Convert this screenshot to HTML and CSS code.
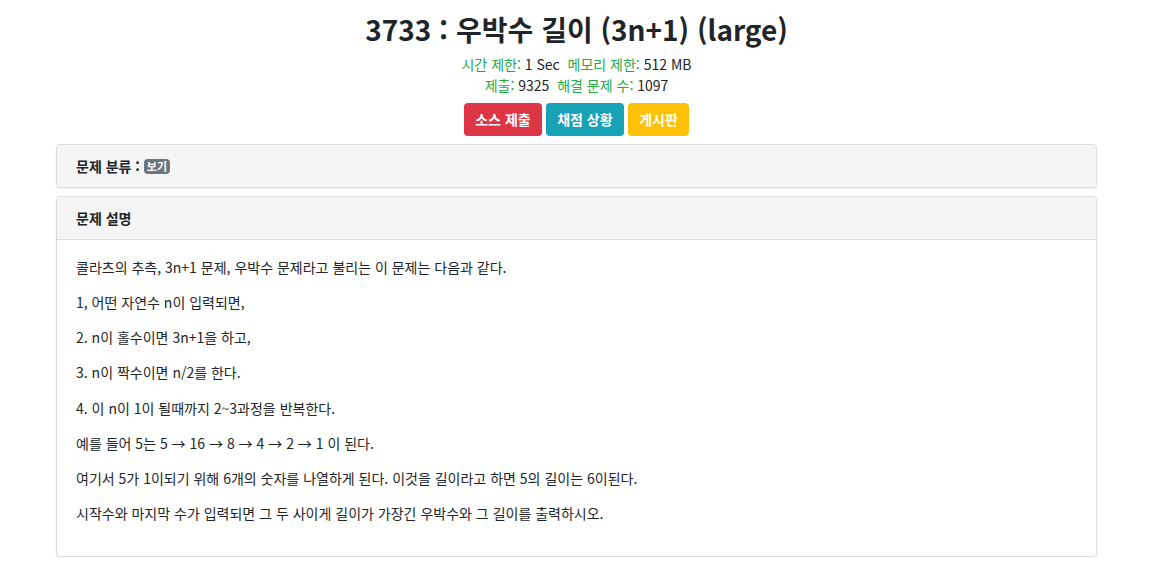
FILE: index.html
```html
<!DOCTYPE html>
<html lang="ko">
<head>
<meta charset="utf-8">
<link rel="stylesheet" href="styles.css">
</head>
<body>
<div class="page">
  <header class="problem-head">
    <h1 class="title">3733 : 우박수 길이 (3n+1) (large)</h1>
    <div class="info"><span class="label">시간 제한:</span> 1 Sec&nbsp; <span class="label">메모리 제한:</span> 512 MB</div>
    <div class="info"><span class="label">제출:</span> 9325&nbsp; <span class="label">해결 문제 수:</span> 1097</div>
    <div class="buttons">
      <a class="btn btn-red">소스 제출</a>
      <a class="btn btn-teal">채점 상황</a>
      <a class="btn btn-yellow">게시판</a>
    </div>
  </header>
  <section class="panel">
    <div class="panel-head">문제 분류 : <span class="badge">보기</span></div>
  </section>
  <section class="panel">
    <div class="panel-head with-border">문제 설명</div>
    <div class="panel-body">
      <p>콜라츠의 추측, 3n+1 문제, 우박수 문제라고 불리는 이 문제는 다음과 같다.</p>
      <p>1, 어떤 자연수 n이 입력되면,</p>
      <p>2. n이 홀수이면 3n+1을 하고,</p>
      <p>3. n이 짝수이면 n/2를 한다.</p>
      <p>4. 이 n이 1이 될때까지 2~3과정을 반복한다.</p>
      <p>예를 들어 5는 5 → 16 → 8 → 4 → 2 → 1 이 된다.</p>
      <p>여기서 5가 1이되기 위해 6개의 숫자를 나열하게 된다. 이것을 길이라고 하면 5의 길이는 6이된다.</p>
      <p>시작수와 마지막 수가 입력되면 그 두 사이게 길이가 가장긴 우박수와 그 길이를 출력하시오.</p>
    </div>
  </section>
</div>
</body>
</html>
```

FILE: styles.css
```css
html, body {
  margin: 0;
  padding: 0;
  background: #fff;
}
body {
  font-family: "Noto Sans CJK KR", "Noto Sans", sans-serif;
  font-size: 14px;
  color: #212529;
}
.page {
  width: 1041px;
  margin-left: 56px;
}
.problem-head {
  text-align: center;
  padding-top: 9px;
}
.title {
  margin: 0 0 5px;
  font-size: 28px;
  font-weight: 700;
  line-height: 40px;
  color: #212529;
}
.info {
  font-size: 14px;
  line-height: 21px;
}
.info .label {
  color: #28a745;
}
.buttons {
  display: flex;
  justify-content: center;
  gap: 3.5px;
  margin-top: 7px;
}
.btn {
  display: inline-block;
  padding: 0 11.5px;
  height: 33px;
  line-height: 33px;
  border-radius: 4px;
  color: #fff;
  font-weight: 700;
  font-size: 14px;
}
.btn-red { background: #dc3545; }
.btn-teal { background: #17a2b8; }
.btn-yellow { background: #ffc107; }
.panel {
  border: 1px solid #ddd;
  border-radius: 4px;
  box-shadow: 0 1px 2px rgba(0,0,0,0.08);
  margin-top: 8px;
  background: #fff;
}
.panel-head {
  background: #f5f5f5;
  padding: 0 19px;
  height: 42px;
  line-height: 42px;
  font-weight: 700;
  font-size: 14px;
  border-radius: 3px;
}
.panel-head.with-border {
  border-bottom: 1px solid #ddd;
  border-radius: 3px 3px 0 0;
}
.badge {
  display: inline-block;
  background: #6c757d;
  color: #fff;
  font-size: 11px;
  font-weight: 700;
  line-height: 15px;
  padding: 0 3px;
  border-radius: 4px;
  vertical-align: 1px;
}
.panel-body {
  padding: 17px 19px 18px;
}
.panel-body p {
  margin: 0 0 14.15px;
  line-height: 21px;
}
```
